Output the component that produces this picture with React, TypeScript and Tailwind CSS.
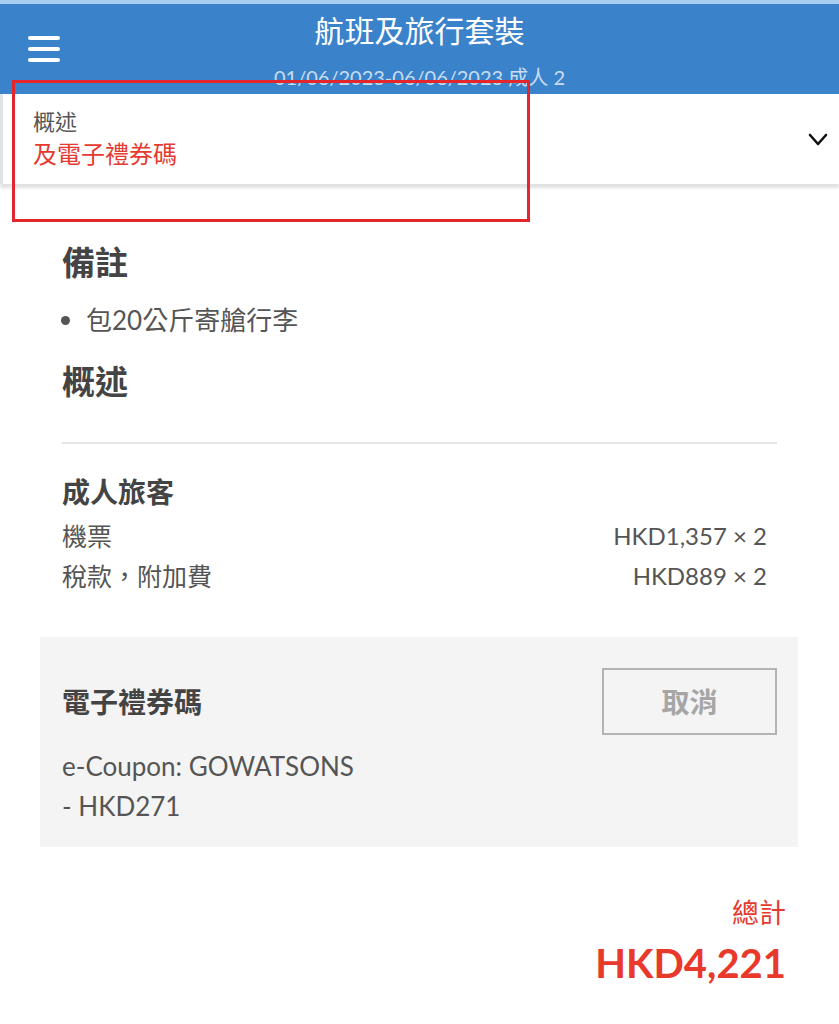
import React from 'react'

const font = { fontFamily: 'Lato, "Noto Sans CJK TC", "Noto Sans", sans-serif' }

const Header: React.FC = () => (
  <header className="h-[94px] bg-[#3a83cb] border-t-[4px] border-[#a9cdf0] grid grid-cols-[1fr_auto_1fr]">
    <div className="pl-[28px] pt-[32px] flex flex-col gap-[7px]">
      <span className="block w-[32px] h-[4px] rounded-full bg-white" />
      <span className="block w-[32px] h-[4px] rounded-full bg-white" />
      <span className="block w-[32px] h-[4px] rounded-full bg-white" />
    </div>
    <div className="flex flex-col items-center">
      <h1 className="text-[30px] leading-[36px] pt-[8px] text-white">航班及旅行套裝</h1>
      <p className="mt-[17px] text-[20px] leading-[24px] text-[#c9dcf0]">01/06/2023-06/06/2023 成人 2</p>
    </div>
    <div />
  </header>
)

const SummaryBar: React.FC = () => (
  <div className="relative h-[90px] bg-white border-l-[3px] border-[#e3e3e3] shadow-[0_4px_3px_rgba(0,0,0,0.12)] flex items-center justify-between pl-[30px] pr-[11px]">
    <div>
      <p className="text-[22px] leading-[30px] text-[#555]">概述</p>
      <p className="text-[24px] leading-[34px] text-[#e53a2f]">及電子禮券碼</p>
    </div>
    <svg width="20" height="13" viewBox="0 0 20 13" fill="none" stroke="#111" strokeWidth="2.6" strokeLinecap="round" strokeLinejoin="round">
      <path d="M2 2l8 9 8-9" />
    </svg>
  </div>
)

const PriceRow: React.FC<{ label: string; price: string }> = ({ label, price }) => (
  <div className="flex justify-between items-center pr-[10px] leading-[40px] text-[#555]">
    <span className="text-[25px]">{label}</span>
    <span className="text-[24px]">{price}</span>
  </div>
)

export default function App() {
  return (
    <div className="relative min-h-[1024px] bg-white overflow-hidden" style={font}>
      <Header />
      <SummaryBar />

      <main className="pl-[62px] pr-[62px]">
        <h2 className="mt-[58px] text-[33px] leading-[40px] font-bold text-[#444]">備註</h2>
        <div className="mt-[21px] flex items-center gap-[16px] -ml-[1px] text-[26px] leading-[34px] text-[#555]">
          <span className="block w-[9px] h-[9px] rounded-full bg-[#555]" />
          <span>包20公斤寄艙行李</span>
        </div>
        <h2 className="mt-[24px] text-[33px] leading-[40px] font-bold text-[#444]">概述</h2>
        <hr className="mt-[41px] border-0 h-[2px] bg-[#e6e6e6]" />

        <h3 className="mt-[30px] text-[28px] leading-[36px] font-bold text-[#444]">成人旅客</h3>
        <div className="mt-[6px]">
          <PriceRow label="機票" price="HKD1,357 × 2" />
          <PriceRow label="稅款，附加費" price="HKD889 × 2" />
        </div>
      </main>

      <section className="mt-[41px] ml-[40px] mr-[41px] bg-[#f4f4f4] pl-[22px] pr-[21px] pt-[31px] pb-[21px]">
        <div className="flex items-center justify-between">
          <h3 className="text-[28px] leading-[36px] font-bold text-[#444]">電子禮券碼</h3>
          <button className="w-[175px] h-[67px] border-2 border-[#b3b3b3] text-[28px] font-bold text-[#a6a6a6] bg-transparent">
            取消
          </button>
        </div>
        <p className="mt-[11px] text-[26px] leading-[40px] text-[#555]">e-Coupon: GOWATSONS</p>
        <p className="text-[26px] leading-[40px] text-[#555]">- HKD271</p>
      </section>

      <div className="pr-[53px] flex flex-col items-end">
        <p className="mt-[48px] text-[27px] leading-[36px] text-[#e53a2f]">總計</p>
        <p className="mt-[8px] text-[40px] leading-[48px] font-bold text-[#e8392b]">HKD4,221</p>
      </div>

      {/* annotation frame over the summary bar */}
      <div className="absolute left-[12px] top-[80px] w-[518px] h-[142px] border-[3px] border-[#e3262b] pointer-events-none" />
    </div>
  )
}
